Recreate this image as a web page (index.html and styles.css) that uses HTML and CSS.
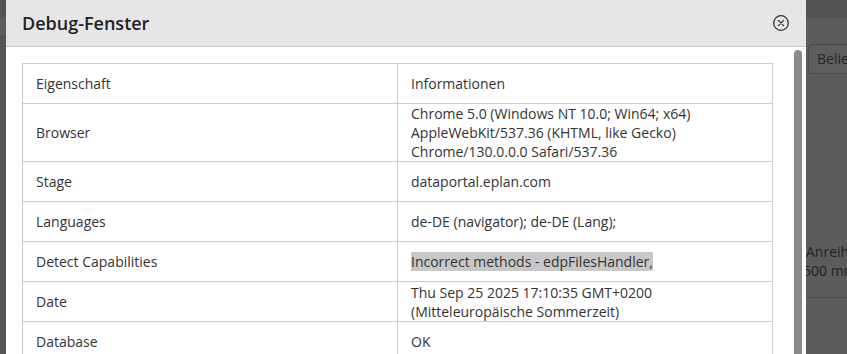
FILE: index.html
```html
<!DOCTYPE html>
<html lang="de">
<head>
    <meta charset="UTF-8" />
    <title>Debug-Fenster</title>
    <link rel="stylesheet" href="styles.css">
</head>
<body>

<div class="page">
    <div class="page-top"></div>
    <div class="page-main">
        <div class="page-left"></div>
        <div class="page-right">
            <div class="page-btn">Belie</div>
            <div class="page-info">
                <div>Anreih</div>
                <div class="shift">500 mm</div>
            </div>
            <div class="page-line"></div>
        </div>
    </div>
</div>

<div class="modal">
    <div class="modal-header">
        <h2>Debug-Fenster</h2>
        <svg class="close" width="18" height="18" viewBox="0 0 18 18">
            <circle cx="9" cy="9" r="7.3" fill="none" stroke="#333" stroke-width="1.3"/>
            <path d="M6.4 6.4 L11.6 11.6 M11.6 6.4 L6.4 11.6" stroke="#333" stroke-width="1.3" stroke-linecap="round"/>
        </svg>
    </div>
    <div class="modal-body">
        <div class="modal-content">
            <table class="debug-table">
                <tr>
                    <td>Eigenschaft</td>
                    <td>Informationen</td>
                </tr>
                <tr>
                    <td>Browser</td>
                    <td>Chrome 5.0 (Windows NT 10.0; Win64; x64)<br>AppleWebKit/537.36 (KHTML, like Gecko)<br>Chrome/130.0.0.0 Safari/537.36</td>
                </tr>
                <tr>
                    <td>Stage</td>
                    <td>dataportal.eplan.com</td>
                </tr>
                <tr>
                    <td>Languages</td>
                    <td>de-DE (navigator); de-DE (Lang);</td>
                </tr>
                <tr>
                    <td>Detect Capabilities</td>
                    <td><span class="marked">Incorrect methods - edpFilesHandler,</span></td>
                </tr>
                <tr>
                    <td>Date</td>
                    <td>Thu Sep 25 2025 17:10:35 GMT+0200<br>(Mitteleuropäische Sommerzeit)</td>
                </tr>
                <tr>
                    <td>Database</td>
                    <td>OK</td>
                </tr>
            </table>
        </div>
        <div class="scroll-track">
            <div class="scroll-thumb"></div>
        </div>
    </div>
</div>

</body>
</html>
```

FILE: styles.css
```css
body {
    margin: 0;
    font-family: 'Open Sans', 'Liberation Sans', sans-serif;
    background: #5c5c5c;
    color: #333;
    overflow: hidden;
    height: 354px;
}

/* dimmed page behind the dialog */
.page {
    height: 354px;
}

.page-top {
    height: 18px;
    background: #535353;
}

.page-main {
    display: flex;
    justify-content: space-between;
}

.page-left {
    width: 6px;
    height: 336px;
    background: #555;
    border-top: 1px solid #4b4b4b;
    margin-top: 18px;
}

.page-right {
    width: 41px;
    display: flex;
    flex-direction: column;
}

.page-btn {
    margin-top: 26px;
    margin-left: 2px;
    width: 60px;
    height: 28px;
    border: 1px solid #4a4a4a;
    border-radius: 4px;
    background: #5e5e5e;
    color: #262626;
    font-size: 14px;
    line-height: 28px;
    padding-left: 8px;
    white-space: nowrap;
}

.page-info {
    margin-top: 168px;
    font-size: 14px;
    line-height: 19px;
    color: #222;
    white-space: nowrap;
}

.page-info .shift {
    margin-left: -3px;
}

.page-line {
    margin-top: 17px;
    height: 1px;
    background: #4a4a4a;
}

/* dialog */
.modal {
    position: absolute;
    top: 0;
    left: 6px;
    width: 800px;
    height: 354px;
    background: #fff;
    display: flex;
    flex-direction: column;
    overflow: hidden;
}

.modal-header {
    height: 46px;
    flex: none;
    display: flex;
    align-items: center;
    justify-content: space-between;
    padding: 0 16px;
    background: #e6e6e8;
    border-bottom: 1px solid #ccc;
}

.modal-header h2 {
    margin: 0;
    font-size: 18px;
    font-weight: 600;
    color: #222;
}

.modal-body {
    flex: 1;
    display: flex;
    min-height: 0;
}

.modal-content {
    flex: 1;
    padding: 16px 21px 0 16px;
}

.scroll-track {
    width: 8px;
    margin-right: 4px;
    padding-top: 3px;
    flex: none;
}

.scroll-thumb {
    height: 100%;
    background: #8a8a8a;
    border-radius: 4px 4px 0 0;
}

.debug-table {
    width: 100%;
    border-collapse: collapse;
    table-layout: fixed;
    font-size: 14px;
    line-height: 19px;
}

.debug-table tr {
    height: 40px;
}

.debug-table td {
    border: 1px solid #ccc;
    padding: 0 13px;
    vertical-align: middle;
}

.marked {
    background: #c8c8c8;
}
```
